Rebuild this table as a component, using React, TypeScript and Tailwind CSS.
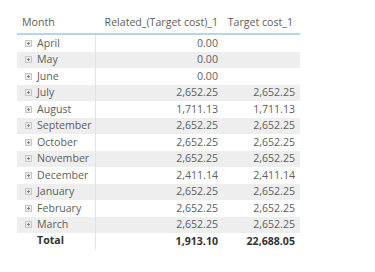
import React from 'react';

interface Row {
  month: string;
  related: string;
  target: string;
}

const rows: Row[] = [
  { month: 'April', related: '0.00', target: '' },
  { month: 'May', related: '0.00', target: '' },
  { month: 'June', related: '0.00', target: '' },
  { month: 'July', related: '2,652.25', target: '2,652.25' },
  { month: 'August', related: '1,711.13', target: '1,711.13' },
  { month: 'September', related: '2,652.25', target: '2,652.25' },
  { month: 'October', related: '2,652.25', target: '2,652.25' },
  { month: 'November', related: '2,652.25', target: '2,652.25' },
  { month: 'December', related: '2,411.14', target: '2,411.14' },
  { month: 'January', related: '2,652.25', target: '2,652.25' },
  { month: 'February', related: '2,652.25', target: '2,652.25' },
  { month: 'March', related: '2,652.25', target: '2,652.25' },
];

// small boxed plus used as the expand toggle on each row header
const ExpandIcon = () => (
  <svg width="7" height="7" viewBox="0 0 7 7" className="shrink-0">
    <rect x="0.5" y="0.5" width="6" height="6" fill="#e9e9e9" stroke="#c8c8c8" />
    <path d="M2 3.5h3M3.5 2v3" stroke="#8a8a8a" strokeWidth="1" />
  </svg>
);

const App: React.FC = () => {
  return (
    <div
      className="w-[375px] h-[272px] bg-white pl-[17px] pt-[12px] text-[10.6px] text-[#605e5c]"
      style={{ fontFamily: '"Open Sans", "Noto Sans", sans-serif' }}
    >
      <div className="w-[283px]">
        {/* header */}
        <div className="grid grid-cols-[79px_126px_78px] h-[23px] items-center border-b-2 border-[#b3d4f2]">
          <div className="pl-[5px]">Month</div>
          <div className="text-right pr-[4px] whitespace-nowrap">Related_(Target cost)_1</div>
          <div className="text-right pr-[7px] whitespace-nowrap">Target cost_1</div>
        </div>

        {/* body */}
        <div>
          {rows.map((r, i) => (
            <div
              key={r.month}
              className={`grid grid-cols-[79px_126px_78px] h-[16.5px] items-center ${
                i % 2 === 1 ? 'bg-[#eeeeee]' : ''
              }`}
            >
              <div className="flex items-center gap-[5px] pl-[8px] h-full border-r border-[#d5e6f7]">
                <ExpandIcon />
                <span className="leading-none">{r.month}</span>
              </div>
              <div className="text-right pr-[4px] leading-none">{r.related}</div>
              <div className="text-right pr-[5px] leading-none">{r.target}</div>
            </div>
          ))}
          <div className="grid grid-cols-[79px_126px_78px] h-[16.5px] items-center font-bold text-[#333333]">
            <div className="pl-[20px] h-full flex items-center border-r border-[#d5e6f7]">Total</div>
            <div className="text-right pr-[4px] leading-none">1,913.10</div>
            <div className="text-right pr-[5px] leading-none">22,688.05</div>
          </div>
        </div>
      </div>
    </div>
  );
};

export default App;
